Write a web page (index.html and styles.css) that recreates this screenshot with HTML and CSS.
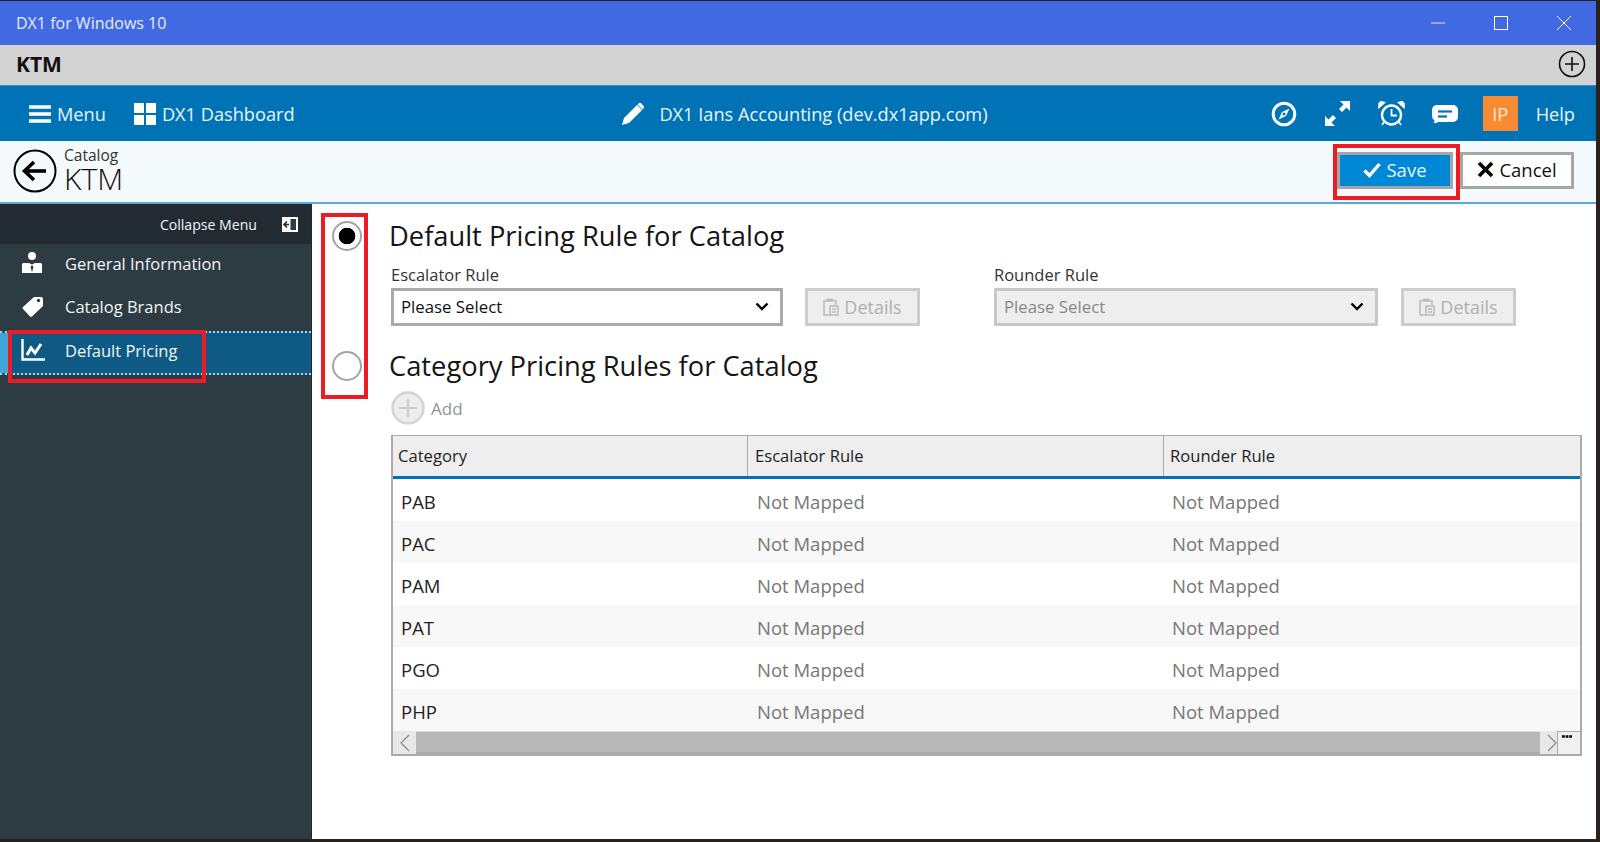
FILE: index.html
```html
<!DOCTYPE html>
<html lang="en">
<head>
<meta charset="utf-8">
<title>DX1 for Windows 10</title>
<link rel="stylesheet" href="styles.css">
</head>
<body>
<div class="window">
  <header class="titlebar">
    <span class="title-text">DX1 for Windows 10</span>
    <div class="win-controls">
      <svg width="14" height="14" viewBox="0 0 14 14"><path d="M0 7h14" stroke="#dfe6fb" stroke-width="1" fill="none"/></svg>
      <svg width="14" height="14" viewBox="0 0 14 14"><rect x=".5" y=".5" width="13" height="13" stroke="#fff" fill="none"/></svg>
      <svg width="14" height="14" viewBox="0 0 14 14"><path d="M0 0l14 14M14 0L0 14" stroke="#fff" fill="none"/></svg>
    </div>
  </header>
  <div class="tabbar">
    <strong class="tab-name">KTM</strong>
    <svg class="tab-add" width="28" height="28" viewBox="0 0 28 28"><circle cx="14" cy="14" r="12.500" fill="none" stroke="#111" stroke-width="1.600"/><path d="M14 7v14M7 14h14" stroke="#111" stroke-width="1.600"/></svg>
  </div>
  <nav class="navbar">
    <div class="nav-left">
      <a class="nav-item nav-menu"><svg width="22" height="18" viewBox="0 0 22 18"><path d="M0 2h22M0 9h22M0 16h22" stroke="#fff" stroke-width="3.400"/></svg>Menu</a>
      <a class="nav-item nav-dash"><svg width="22" height="22" viewBox="0 0 22 22" fill="#fff"><rect width="10" height="10"/><rect x="12" width="10" height="10"/><rect y="12" width="10" height="10"/><rect x="12" y="12" width="10" height="10"/></svg>DX1 Dashboard</a>
    </div>
    <div class="nav-center">
      <svg width="24" height="24" viewBox="0 0 24 24" fill="#fff"><path d="M1 23l2-7L16 3l5 5L8 21zM17.500 1.500a2 2 0 0 1 2.800 0l2.200 2.200a2 2 0 0 1 0 2.800L21.500 7.500l-5-5z"/></svg>
      <span>DX1 Ians Accounting (dev.dx1app.com)</span>
    </div>
    <div class="nav-right">
      <svg width="26" height="26" viewBox="0 0 26 26"><circle cx="13" cy="13" r="10.800" fill="none" stroke="#fff" stroke-width="3"/><path d="M18.500 7.500L15 15l-7.500 3.500L11 11zM13 11.500a1.500 1.500 0 1 0 .01 0z" fill="#fff" fill-rule="evenodd"/></svg>
      <svg width="27" height="27" viewBox="0 0 27 27" fill="#fff"><path d="M16 1h10v10l-3.500-3.500L18 12l-3-3 4.500-4.500zM1 26V16l3.500 3.500L9 15l3 3-4.500 4.500L11 26z"/></svg>
      <svg width="27" height="27" viewBox="0 0 27 27"><circle cx="13.500" cy="15" r="9.500" fill="none" stroke="#fff" stroke-width="2.400"/><path d="M13.500 9v6.500H19" fill="none" stroke="#fff" stroke-width="1.800"/><path d="M1 7.500L6.500 2.500 3 1.500 1 3.500zM26 7.500L20.500 2.500 24 1.500 26 3.500zM6 22l-2 3M21 22l2 3" fill="#fff" stroke="#fff" stroke-width="1.500"/></svg>
      <svg width="26" height="20" viewBox="0 0 26 20"><path d="M6 1h15a5 5 0 0 1 5 5v7a5 5 0 0 1-5 5H6q-2 1.500-4.500 .5 1-1 1-2.500Q0 15 0 12V6a5 5 0 0 1 6-5z" fill="#fff"/><path d="M6 7.500h14" stroke="#0073b7" stroke-width="2.200"/><path d="M6 12.500h9" stroke="#0073b7" stroke-width="2.200"/></svg>
      <span class="avatar">IP</span>
      <span class="help">Help</span>
    </div>
  </nav>
  <div class="pagehead">
    <div class="crumb">
      <svg width="44" height="44" viewBox="0 0 44 44"><circle cx="22" cy="22" r="20.500" fill="none" stroke="#000" stroke-width="2"/><path d="M11 22h22" stroke="#000" stroke-width="3.600"/><path d="M21 13l-9.500 9 9.500 9" fill="none" stroke="#000" stroke-width="3.600"/></svg>
      <div class="crumb-text">
        <span class="crumb-small">Catalog</span>
        <span class="crumb-big">KTM</span>
      </div>
    </div>
    <div class="actions">
      <button class="btn btn-save"><svg width="18" height="16" viewBox="0 0 18 16"><path d="M1.500 8.500L6.500 13.500 16.500 2" fill="none" stroke="#fff" stroke-width="3.400"/></svg>Save</button>
      <button class="btn btn-cancel"><svg width="17" height="17" viewBox="0 0 17 17"><path d="M2 2l13 13M15 2L2 15" stroke="#000" stroke-width="3.600"/></svg>Cancel</button>
    </div>
  </div>
  <div class="body">
    <aside class="sidebar">
      <div class="collapse">
        <span>Collapse Menu</span>
        <svg width="16" height="15" viewBox="0 0 16 15"><rect width="16" height="15" fill="#fff"/><rect x="8.500" y="2" width="5.500" height="11" fill="#2d3b43"/><path d="M7 7.500H2.500M5 4.500l-3 3 3 3" fill="none" stroke="#222b32" stroke-width="1.600"/></svg>
      </div>
      <a class="side-item side-person">
        <svg width="20" height="24" viewBox="0 0 20 24"><circle cx="10" cy="5" r="4" fill="#fff"/><path d="M1.500 12H7l3 1.500 3-1.500h5.500q1.500 0 1.500 1.500V22H0v-8.500Q0 12 1.500 12z" fill="#fff"/><path d="M10 14l-1.500 2 1.500 5 1.500-5z" fill="#2d3b43"/></svg>
        General Information
      </a>
      <a class="side-item side-tag">
        <svg width="22" height="22" viewBox="0 0 22 22"><path d="M12 2h7a2 2 0 0 1 2 2v7L10 21.500a1.500 1.500 0 0 1-2 0L1 14a1.500 1.500 0 0 1 0-2z" fill="#fff"/><circle cx="16.500" cy="5.500" r="1.700" fill="#2d3b43"/></svg>
        Catalog Brands
      </a>
      <a class="side-item active">
        <svg width="24" height="22" viewBox="0 0 24 22" fill="none" stroke="#fff"><path d="M1.500 0v20.500H24" stroke-width="2.400"/><path d="M6 16l4-7 4 5 6-9" stroke-width="3"/></svg>
        Default Pricing
      </a>
    </aside>
    <main class="content">
      <div class="radios">
        <span class="radio checked"></span>
        <span class="radio"></span>
      </div>
      <div class="forms">
        <h2 class="heading">Default Pricing Rule for Catalog</h2>
        <div class="rule-row">
          <div class="field field-esc">
            <label>Escalator Rule</label>
            <div class="select"><span>Please Select</span><svg width="14" height="9" viewBox="0 0 14 9"><path d="M1.500 1.500L7 7l5.500-5.500" fill="none" stroke="#000" stroke-width="2.400"/></svg></div>
          </div>
          <button class="details"><svg width="16" height="18" viewBox="0 0 16 18" fill="none" stroke="#bbb" stroke-width="1.500"><path d="M3 3H1v14h6M11 3h2v4M4 3h6V1.500H4zM7 8h8v9H7zM9 11h4M9 14h4"/></svg>Details</button>
          <div class="field field-rnd">
            <label>Rounder Rule</label>
            <div class="select disabled"><span>Please Select</span><svg width="14" height="9" viewBox="0 0 14 9"><path d="M1.500 1.500L7 7l5.500-5.500" fill="none" stroke="#000" stroke-width="2.400"/></svg></div>
          </div>
          <button class="details"><svg width="16" height="18" viewBox="0 0 16 18" fill="none" stroke="#bbb" stroke-width="1.500"><path d="M3 3H1v14h6M11 3h2v4M4 3h6V1.500H4zM7 8h8v9H7zM9 11h4M9 14h4"/></svg>Details</button>
        </div>
        <h2 class="heading heading-cat">Category Pricing Rules for Catalog</h2>
        <div class="add">
          <svg width="34" height="34" viewBox="0 0 34 34"><circle cx="17" cy="17" r="15.500" fill="#eee" stroke="#d4d4d4" stroke-width="2.500"/><path d="M17 8v18M8 17h18" stroke="#ccc" stroke-width="2"/></svg>
          <span>Add</span>
        </div>
        <div class="grid">
          <div class="grid-head">
            <div>Category</div><div>Escalator Rule</div><div>Rounder Rule</div>
          </div>
          <div class="grid-row"><div>PAB</div><div>Not Mapped</div><div>Not Mapped</div></div>
          <div class="grid-row"><div>PAC</div><div>Not Mapped</div><div>Not Mapped</div></div>
          <div class="grid-row"><div>PAM</div><div>Not Mapped</div><div>Not Mapped</div></div>
          <div class="grid-row"><div>PAT</div><div>Not Mapped</div><div>Not Mapped</div></div>
          <div class="grid-row"><div>PGO</div><div>Not Mapped</div><div>Not Mapped</div></div>
          <div class="grid-row"><div>PHP</div><div>Not Mapped</div><div>Not Mapped</div></div>
          <div class="scroll">
            <span class="sb-arrow"><svg width="10" height="18" viewBox="0 0 10 18"><path d="M9 1L1 9l8 8" fill="none" stroke="#8a8a8a" stroke-width="1.200"/></svg></span>
            <span class="sb-track"></span>
            <span class="sb-arrow sb-right"><svg width="10" height="18" viewBox="0 0 10 18"><path d="M1 1l8 8-8 8" fill="none" stroke="#8a8a8a" stroke-width="1.200"/></svg></span>
            <span class="sb-corner"><svg width="10" height="3" viewBox="0 0 10 3"><path d="M0 1.500h10" stroke="#000" stroke-width="2.400" stroke-dasharray="2.800 .8"/></svg></span>
          </div>
        </div>
      </div>
    </main>
  </div>
  <span class="mark mark-side"></span>
  <span class="mark mark-radio"></span>
  <span class="mark mark-save"></span>
</div>
</body>
</html>
```

FILE: styles.css
```css
* { box-sizing: border-box; }
html, body { margin: 0; height: 100%; }
body {
  background: #2a211c;
  padding: 1px 4px 3px 0;
  font-family: "Open Sans", "Noto Sans", sans-serif;
  color: #111;
  overflow: hidden;
}
.window {
  position: relative;
  height: 838px;
  background: #fff;
  display: flex;
  flex-direction: column;
}
.titlebar {
  flex: 0 0 44px;
  background: #4169e1;
  color: #e6ebfb;
  display: flex;
  align-items: center;
  justify-content: space-between;
  padding: 0 25px 0 16px;
  font-size: 16px;
}
.win-controls { display: flex; gap: 49px; }
.tabbar {
  flex: 0 0 40px;
  background: #d3d3d3;
  display: flex;
  align-items: center;
  justify-content: space-between;
  padding: 0 10px 2px 16px;
}
.tab-name { font-size: 21px; font-weight: 700; }
.navbar {
  flex: 0 0 56px;
  background: #0073b7;
  color: #eaf3f9;
  display: grid;
  grid-template-columns: 1fr auto 1fr;
  align-items: center;
  padding: 0 21px 0 29px;
  font-size: 18.200px;
  border-top: 1px solid #3c8fc4;
}
.nav-left, .nav-right, .nav-center, .nav-item { display: flex; align-items: center; }
.nav-left { gap: 28px; }
.nav-item { gap: 6px; }
.nav-center { gap: 14px; margin-left: 5px; }
.nav-right { justify-content: flex-end; gap: 27px; }
.avatar {
  background: #f68b33;
  color: #fde6d2;
  width: 35px;
  height: 35px;
  display: flex;
  align-items: center;
  justify-content: center;
  margin-left: -2px;
}
.help { margin-left: -9px; }
.pagehead {
  flex: 0 0 63px;
  background: #f4f9fb;
  border-bottom: 2px solid #5aa9dc;
  display: flex;
  align-items: center;
  justify-content: space-between;
  padding: 0 22px 2px 13px;
}
.crumb { display: flex; align-items: center; gap: 7px; }
.crumb-text { display: flex; flex-direction: column; }
.crumb-small { font-size: 15.500px; line-height: 16px; color: #333; }
.crumb-big { font-size: 30px; line-height: 31px; font-weight: 300; }
.actions { display: flex; gap: 7px; }
.btn {
  height: 37px;
  width: 114px;
  font: inherit;
  font-size: 18.500px;
  border: 3px solid #a6a6a6;
  display: flex;
  align-items: center;
  justify-content: center;
  gap: 5px;
  padding: 0 0 2px;
}
.btn-save { background: #0087d6; color: #e8f4fb; width: 116px; }
.btn-cancel { background: #fff; color: #111; }
.body { flex: 1; display: flex; min-height: 0; }
.sidebar {
  flex: 0 0 312px;
  background: #2d3b43;
  color: #f2f4f5;
  border-right: 1px solid #1e282e;
}
.collapse {
  height: 40px;
  background: #222b32;
  display: flex;
  align-items: center;
  justify-content: flex-end;
  gap: 25px;
  padding-right: 13px;
  font-size: 14.100px;
}
.side-item {
  height: 43px;
  display: flex;
  align-items: center;
  font-size: 16.500px;
  padding: 0 0 5px 22px;
  border-top: 1px solid transparent;
  border-bottom: 1px solid transparent;
}
.side-person { gap: 23px; }
.side-tag { gap: 21px; }
.active {
  height: 44px;
  margin-top: 1px;
  padding: 0 0 6px 21px;
  gap: 20px;
  background: #0f5a85;
  border-top: 2px dotted #a9cfe4;
  border-bottom: 2px dotted #a9cfe4;
  box-shadow: inset 8px 0 0 #42a5d8;
}
.content { flex: 1; display: flex; min-width: 0; }
.radios {
  flex: 0 0 79px;
  padding: 17px 0 0 20px;
  display: flex;
  flex-direction: column;
  gap: 100px;
}
.radio {
  width: 30px;
  height: 30px;
  border-radius: 50%;
  border: 2.500px solid #a3a3a3;
  background: #fff;
  display: block;
}
.checked { background: radial-gradient(circle, #000 0 8px, #fff 8.600px); }
.forms { flex: 1; min-width: 0; padding: 12px 14px 0 0; }
.heading {
  margin: 0 0 0 -2px;
  font-size: 27.300px;
  line-height: 40px;
  font-weight: 400;
  color: #151515;
}
.rule-row { display: flex; align-items: flex-end; margin-top: 8px; }
.field label { display: block; font-size: 16.500px; line-height: 22px; margin-bottom: 2px; color: #333; }
.field-esc { width: 392px; margin-right: 22px; }
.field-rnd { width: 384px; margin-left: 74px; margin-right: 23px; }
.select {
  height: 38px;
  border: 3px solid #aaa;
  background: #fff;
  display: flex;
  align-items: center;
  justify-content: space-between;
  padding: 0 11px 1px 7px;
  font-size: 16.800px;
}
.disabled { background: #eee; border-color: #c8c8c8; color: #888; }
.details {
  width: 115px;
  height: 38px;
  border: 3px solid #ccc;
  background: #eee;
  color: #b0b0b0;
  font: inherit;
  font-size: 18px;
  display: flex;
  align-items: center;
  justify-content: center;
  gap: 5px;
  padding: 0;
}
.heading-cat { margin-top: 20px; }
.add {
  display: flex;
  align-items: center;
  gap: 6px;
  color: #8f949b;
  font-size: 17px;
  margin-top: 5px;
}
.grid {
  margin-top: 10px;
  border: 2px solid #ababab;
  border-top-width: 1px;
}
.grid-head, .grid-row {
  display: grid;
  grid-template-columns: 354px 416px 1fr;
}
.grid-head {
  height: 43px;
  background: #eee;
  border-bottom: 3px solid #0073b7;
  font-size: 16.600px;
  color: #222;
}
.grid-head div {
  display: flex;
  align-items: center;
  padding: 0 6px 2px;
  border-left: 1px solid #ababab;
}
.grid-head div:first-child { border-left: 0; padding-left: 5px; }
.grid-head div:nth-child(2) { padding-left: 7px; }
.grid-row { height: 42px; padding-top: 3px; align-items: center; font-size: 18.500px; color: #777; background: #fff; }
.grid-row:nth-child(odd) { background: #f8f8f8; }
.grid-row div { padding-left: 9px; }
.grid-row div:first-child { color: #222; padding-left: 8px; }
.grid-row div:nth-child(2) { padding-left: 10px; }
.scroll { display: flex; height: 23px; background: #e8e8e8; }
.sb-arrow { width: 23px; display: flex; align-items: center; justify-content: center; }
.sb-track { flex: 1; background: #b8b8b8; border-top: 1px solid #ddd; border-bottom: 2px solid #aaa; }
.sb-right { width: 17px; justify-content: flex-end; }
.sb-corner {
  width: 23px;
  background: #f0f0f0;
  border: 1px solid #aaa;
  border-width: 1px 0 0 1px;
  padding: 3px 0 0 4px;
  display: block;
}
.sb-corner svg { display: block; }
.mark { position: absolute; border: 4px solid #ed1c24; pointer-events: none; }
.mark-side { left: 8px; top: 329px; width: 198px; height: 53px; }
.mark-radio { left: 321px; top: 212px; width: 47px; height: 186px; }
.mark-save { left: 1333px; top: 143px; width: 127px; height: 56px; }
```
